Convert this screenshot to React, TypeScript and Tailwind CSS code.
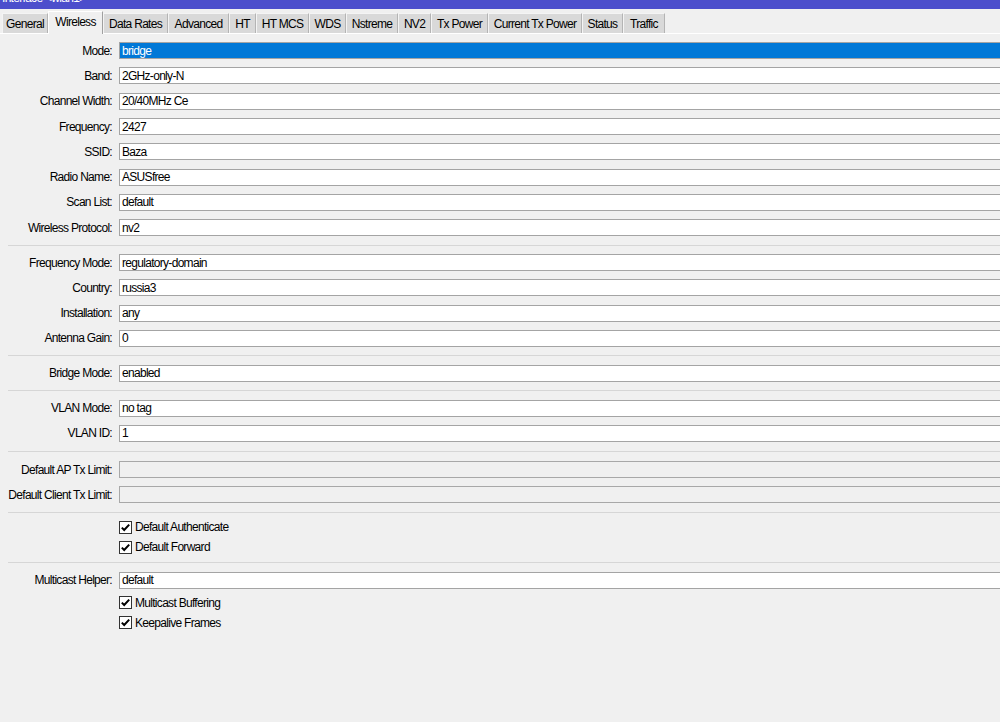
import React from "react";

const tabs: { name: string; w: number }[] = [
  { name: "General", w: 46 },
  { name: "Wireless", w: 55 },
  { name: "Data Rates", w: 65 },
  { name: "Advanced", w: 61 },
  { name: "HT", w: 27 },
  { name: "HT MCS", w: 53 },
  { name: "WDS", w: 37 },
  { name: "Nstreme", w: 52 },
  { name: "NV2", w: 33 },
  { name: "Tx Power", w: 57 },
  { name: "Current Tx Power", w: 94 },
  { name: "Status", w: 41 },
  { name: "Traffic", w: 42 },
];

type Row =
  | { kind: "field"; label: string; value: string; selected?: boolean; disabled?: boolean }
  | { kind: "check"; label: string };

const sections: Row[][] = [
  [
    { kind: "field", label: "Mode:", value: "bridge", selected: true },
    { kind: "field", label: "Band:", value: "2GHz-only-N" },
    { kind: "field", label: "Channel Width:", value: "20/40MHz Ce" },
    { kind: "field", label: "Frequency:", value: "2427" },
    { kind: "field", label: "SSID:", value: "Baza" },
    { kind: "field", label: "Radio Name:", value: "ASUSfree" },
    { kind: "field", label: "Scan List:", value: "default" },
    { kind: "field", label: "Wireless Protocol:", value: "nv2" },
  ],
  [
    { kind: "field", label: "Frequency Mode:", value: "regulatory-domain" },
    { kind: "field", label: "Country:", value: "russia3" },
    { kind: "field", label: "Installation:", value: "any" },
    { kind: "field", label: "Antenna Gain:", value: "0" },
  ],
  [{ kind: "field", label: "Bridge Mode:", value: "enabled" }],
  [
    { kind: "field", label: "VLAN Mode:", value: "no tag" },
    { kind: "field", label: "VLAN ID:", value: "1" },
  ],
  [
    { kind: "field", label: "Default AP Tx Limit:", value: "", disabled: true },
    { kind: "field", label: "Default Client Tx Limit:", value: "", disabled: true },
  ],
  [
    { kind: "check", label: "Default Authenticate" },
    { kind: "check", label: "Default Forward" },
  ],
  [
    { kind: "field", label: "Multicast Helper:", value: "default" },
    { kind: "check", label: "Multicast Buffering" },
    { kind: "check", label: "Keepalive Frames" },
  ],
];

const sepHeights = [0, 9.5, 9.5, 9.5, 11, 9.5, 10.5];

function Field({ row }: { row: Extract<Row, { kind: "field" }> }) {
  return (
    <div className="flex h-[25.3px] items-center">
      <div className="w-[113px] shrink-0 text-right pr-px">{row.label}</div>
      <div
        className={
          "ml-[6px] mr-[-20px] flex h-[17px] flex-1 items-center border " +
          (row.disabled ? "border-[#a8a8a8] bg-[#f0f0f0]" : "border-[#a4a4a4] bg-white")
        }
      >
        {row.selected ? (
          <div className="flex h-[15px] flex-1 items-center bg-[#0078d7] pl-[2px] text-white">{row.value}</div>
        ) : (
          <div className="pl-[2px]">{row.value}</div>
        )}
      </div>
    </div>
  );
}

function Check({ label }: { label: string }) {
  return (
    <div className="flex h-[20px] items-center pl-[119px]">
      <div className="flex h-[13px] w-[13px] items-center justify-center border border-[#333333] bg-white">
        <svg width="11" height="11" viewBox="0 0 11 11">
          <path d="M1.8 5.6 L4.2 8 L9.2 2.6" fill="none" stroke="#000" strokeWidth="2" />
        </svg>
      </div>
      <div className="ml-[3px]">{label}</div>
    </div>
  );
}

function Separator({ h }: { h: number }) {
  return (
    <div className="flex items-center pl-[8px]" style={{ height: h }}>
      <div className="h-px flex-1 bg-[#d6d6d6]" />
    </div>
  );
}

export default function App() {
  return (
    <div
      className="h-[722px] w-full overflow-hidden bg-[#f0f0f0] text-[12px] tracking-[-0.7px] text-black"
      style={{ fontFamily: '"Liberation Sans", Arial, sans-serif' }}
    >
      <div className="h-[9px] overflow-hidden bg-[#4c4ecc] pl-[2px] text-white">
        <div className="mt-[-9px] leading-[14px]">Interface &lt;wlan1&gt;</div>
      </div>
      <div className="flex h-[24px] items-end pl-[2px]">
        {tabs.map((t) =>
          t.name === "Wireless" ? (
            <div
              key={t.name}
              className="relative z-10 mb-[-1px] flex h-[23px] items-center justify-center border-l border-r border-t border-l-white border-r-[#a0a0a0] border-t-white bg-[#f0f0f0] pb-[2px]"
              style={{ width: t.w }}
            >
              {t.name}
            </div>
          ) : (
            <div
              key={t.name}
              className="flex h-[20px] items-center justify-center border-l border-r border-t border-l-[#f4f4f4] border-r-[#b4b4b4] border-t-[#f4f4f4] bg-[#d9d9d9]"
              style={{ width: t.w }}
            >
              {t.name}
            </div>
          )
        )}
      </div>
      <div className="h-px bg-white" />
      <div className="pt-[4px]">
        {sections.map((sec, i) => (
          <React.Fragment key={i}>
            {i > 0 && <Separator h={sepHeights[i]} />}
            {sec.map((r, j) =>
              r.kind === "field" ? <Field key={j} row={r} /> : <Check key={j} label={r.label} />
            )}
          </React.Fragment>
        ))}
      </div>
    </div>
  );
}
